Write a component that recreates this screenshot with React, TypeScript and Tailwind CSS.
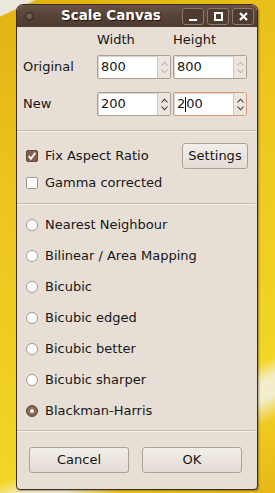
import React from "react";

const Chevron = ({ up, dim }: { up?: boolean; dim?: boolean }) => (
  <svg width="7" height="5" viewBox="0 0 7 5" className="block">
    <path
      d={up ? "M0.5 4.5 L3.5 1.2 L6.5 4.5" : "M0.5 0.5 L3.5 3.8 L6.5 0.5"}
      fill="none"
      stroke={dim ? "#b8b0a7" : "#3a332d"}
      strokeWidth="1.1"
    />
  </svg>
);

const Spin = ({
  value,
  dim,
  focused,
}: {
  value: React.ReactNode;
  dim?: boolean;
  focused?: boolean;
}) => (
  <div
    className={`flex h-[24px] w-[74px] rounded-[2px] border ${
      focused ? "border-[#d99a74]" : "border-[#a9a096]"
    }`}
  >
    <div className="flex flex-1 items-center bg-white pl-[3px] shadow-[inset_1px_1px_0_#d9d3cc]">
      {value}
    </div>
    <div className="flex w-[13px] flex-col items-center justify-center gap-[3px] border-l border-[#cfc7be] bg-[#ece6df]">
      <Chevron up dim={dim} />
      <Chevron dim={dim} />
    </div>
  </div>
);

const Separator = () => (
  <div className="mr-[2px] flex flex-col">
    <div className="h-px bg-[#c3b9ae]" />
    <div className="h-px bg-[#f6f2ee]" />
  </div>
);

const Check = ({ checked }: { checked?: boolean }) =>
  checked ? (
    <div className="flex h-[12px] w-[12px] items-center justify-center rounded-[2px] border border-[#5e4536] bg-[#84604b]">
      <svg width="10" height="10" viewBox="0 0 10 10">
        <path d="M1.8 5.2 L4 7.8 L8.3 1.8" fill="none" stroke="#fff" strokeWidth="1.9" />
      </svg>
    </div>
  ) : (
    <div className="h-[12px] w-[12px] rounded-[2px] border border-[#a39a90] bg-white" />
  );

const Radio = ({ checked }: { checked?: boolean }) =>
  checked ? (
    <div className="flex h-[12px] w-[12px] items-center justify-center rounded-full border border-[#5e4536] bg-[#8a6650]">
      <div className="h-[4px] w-[4px] rounded-full bg-white" />
    </div>
  ) : (
    <div className="h-[12px] w-[12px] rounded-full border border-[#a39a90] bg-white" />
  );

const Button = ({ label, w }: { label: string; w: string }) => (
  <div
    className={`${w} flex h-[26px] items-center justify-center rounded-[3px] border border-[#aaa096] bg-[linear-gradient(#f2eee9,#ece6df_50%,#e3dcd3)] text-[#141414]`}
  >
    {label}
  </div>
);

const TitleButton = ({ children }: { children: React.ReactNode }) => (
  <div className="flex h-[17px] w-[22px] items-center justify-center rounded-[3px] border border-[#8d786a] bg-[#4e3b31]">
    {children}
  </div>
);

const methods = [
  "Nearest Neighbour",
  "Bilinear / Area Mapping",
  "Bicubic",
  "Bicubic edged",
  "Bicubic better",
  "Bicubic sharper",
  "Blackman-Harris",
];

export default function App() {
  return (
    <div className="h-[493px] w-[275px] overflow-hidden bg-[linear-gradient(155deg,#ebe8de_0px,#ebe8de_14px,#e3b414_16px,#ecc41e_30%,#f1d024_65%,#f2d628_78%,#f4ecc4_81%,#f3eed0_84%,#efcb22_88%,#e6b818_100%)] pl-[16px] pt-[4px] font-['DejaVu_Sans',sans-serif] text-[13px] text-[#161616]">
      <div className="flex h-[486px] w-[242px] flex-col overflow-hidden rounded-t-[7px] rounded-b-[4px] border border-[#3a2b23] bg-[#e7dfd6] shadow-[1px_1px_2px_rgba(0,0,0,0.35)]">
        {/* title bar */}
        <div className="flex h-[22px] items-center bg-[linear-gradient(#6a5244,#574237_50%,#4f3b31)] pl-[8px] pr-[3px]">
          <div className="h-[9px] w-[9px] rounded-full border border-[#2e231d] bg-[radial-gradient(circle_at_40%_35%,#7d6a5e,#4a382f)]" />
          <div className="ml-[27px] flex-1 text-[13.5px] font-bold leading-none text-white [text-shadow:1px_1px_1px_#1e1510]">
            Scale Canvas
          </div>
          <div className="flex gap-[3px]">
            <TitleButton>
              <div className="mt-[7px] h-[2px] w-[8px] bg-white" />
            </TitleButton>
            <TitleButton>
              <div className="h-[9px] w-[9px] border-2 border-white" />
            </TitleButton>
            <TitleButton>
              <svg width="9" height="9" viewBox="0 0 9 9">
                <path d="M1 1 L8 8 M8 1 L1 8" stroke="#fff" strokeWidth="2.2" />
              </svg>
            </TitleButton>
          </div>
        </div>

        {/* body */}
        <div className="flex flex-1 flex-col">
          <div className="pl-[6px]">
            <div className="grid h-[26px] grid-cols-[74px_76px_74px] items-center">
              <span />
              <span>Width</span>
              <span>Height</span>
            </div>
            <div className="mt-[2px] grid grid-cols-[74px_76px_74px] items-center">
              <span>Original</span>
              <Spin value="800" dim />
              <Spin value="800" dim />
            </div>
            <div className="mt-[13px] grid grid-cols-[74px_76px_74px] items-center">
              <span>New</span>
              <Spin value="200" />
              <Spin
                focused
                value={
                  <span className="flex items-center">
                    2<span className="h-[15px] w-px bg-black" />
                    00
                  </span>
                }
              />
            </div>
          </div>

          <div className="mt-[14px]">
            <Separator />
          </div>

          <div className="mt-[11px] flex h-[26px] items-center pl-[9px] pr-[9px]">
            <Check checked />
            <span className="ml-[7px] flex-1">Fix Aspect Ratio</span>
            <Button label="Settings" w="w-[66px]" />
          </div>
          <div className="mt-[1px] flex h-[26px] items-center pl-[9px]">
            <Check />
            <span className="ml-[7px]">Gamma corrected</span>
          </div>

          <div className="mt-[7px]">
            <Separator />
          </div>

          <div className="mt-[4px] flex flex-col">
            {methods.map((m, i) => (
              <div key={m} className="flex h-[31px] items-center pl-[9px]">
                <Radio checked={i === methods.length - 1} />
                <span className="ml-[7px]">{m}</span>
              </div>
            ))}
          </div>

          <div className="mt-[4px]">
            <Separator />
          </div>

          <div className="mt-[15px] flex gap-[13px] pl-[12px]">
            <Button label="Cancel" w="w-[100px]" />
            <Button label="OK" w="w-[100px]" />
          </div>
        </div>
      </div>
    </div>
  );
}
